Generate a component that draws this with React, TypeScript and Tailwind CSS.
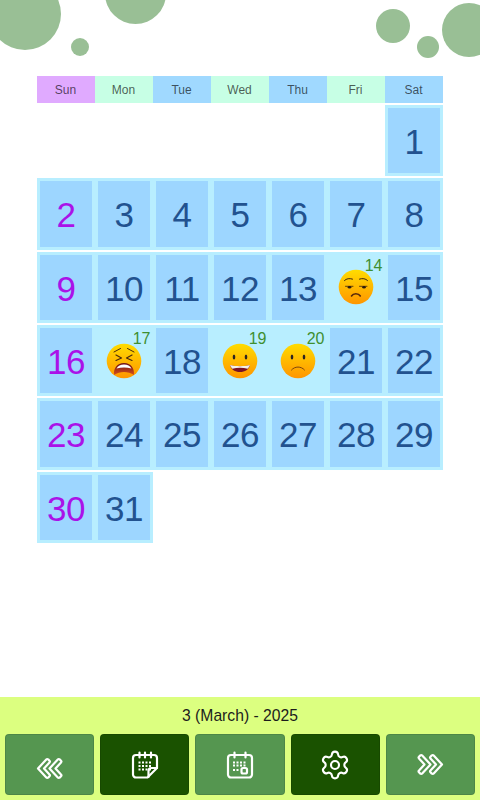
import React from 'react';
import { Settings } from 'lucide-react';

const DAYS = ['Sun', 'Mon', 'Tue', 'Wed', 'Thu', 'Fri', 'Sat'];
const DAY_BG = ['bg-[#e0aaff]', 'bg-[#c7ffe5]', 'bg-[#a0d9ff]', 'bg-[#c7ffe5]', 'bg-[#a0d9ff]', 'bg-[#c7ffe5]', 'bg-[#a0d9ff]'];

type Mood = 'annoyed' | 'tired' | 'happy' | 'sad';
const MOODS: Record<number, Mood> = { 14: 'annoyed', 17: 'tired', 19: 'happy', 20: 'sad' };

const Face: React.FC<{ mood: Mood }> = ({ mood }) => (
  <svg width="36" height="36" viewBox="0 0 36 36">
    <defs>
      <linearGradient id={`face-${mood}`} x1="0" y1="0" x2="0" y2="1">
        <stop offset="0" stopColor="#ffdc00" />
        <stop offset="1" stopColor="#ff9500" />
      </linearGradient>
      <linearGradient id="mouth-tired" x1="0" y1="0" x2="0" y2="1">
        <stop offset="0" stopColor="#6a1018" />
        <stop offset="1" stopColor="#d8501a" />
      </linearGradient>
    </defs>
    <circle cx="18" cy="18" r="17.3" fill={`url(#face-${mood})`} />
    {mood === 'annoyed' && (
      <g fill="none" stroke="#3a2410" strokeLinecap="round">
        <path d="M6.500 11.500c2-2 5-2.400 8-1.400M21.500 10.100c3-1 6-.6 8 1.400" strokeWidth="1" />
        <path d="M7.500 17.300h7.500M21.500 17.300H29" strokeWidth="0.800" />
        <ellipse cx="11.500" cy="18.300" rx="1.800" ry="1.200" fill="#2b1a0c" stroke="none" />
        <ellipse cx="26" cy="18.300" rx="1.800" ry="1.200" fill="#2b1a0c" stroke="none" />
        <path d="M13.500 27c1.800-3 7-3 8.800 0" strokeWidth="1.600" stroke="#5a2a0a" />
      </g>
    )}
    {mood === 'tired' && (
      <g fill="none" stroke="#4a2a0c" strokeLinecap="round" strokeLinejoin="round">
        <path d="M8 9l6.500-3.500M28 9l-6.500-3.500" strokeWidth="1" />
        <path d="M10 12l5.500 3-5.500 2.500M26 12l-5.500 3 5.500 2.500" strokeWidth="1.200" />
        <path d="M8 32c-.5-7 3-12 10-12s10.500 5 10 12c-3-2-6.500-3-10-3s-7 1-10 3z" fill="url(#mouth-tired)" stroke="none" />
        <path d="M10.500 25.500c1.500-2.800 4-4 7.500-4s6 1.200 7.500 4c-2.500-.8-5-1.100-7.500-1.100s-5 .3-7.500 1.100z" fill="#fff" stroke="none" />
      </g>
    )}
    {mood === 'happy' && (
      <g>
        <ellipse cx="12" cy="14" rx="1.300" ry="2.600" fill="#2b2420" />
        <ellipse cx="24" cy="14" rx="1.300" ry="2.600" fill="#2b2420" />
        <path d="M8 22c3 .8 6.500 1.200 10 1.200s7-.4 10-1.200c-1 4.800-5 7-10 7s-9-2.200-10-7z" fill="#7a1226" />
        <path d="M8 22c3 .8 6.500 1.200 10 1.200s7-.4 10-1.200c-.4 1.500-1.200 2.700-2.400 3.700-2.400-.6-4.900-.9-7.600-.9s-5.200.3-7.600.9C9.200 24.700 8.400 23.500 8 22z" fill="#f4f0ea" />
      </g>
    )}
    {mood === 'sad' && (
      <g>
        <ellipse cx="12" cy="14" rx="1.300" ry="2.600" fill="#2b2420" />
        <ellipse cx="24" cy="14" rx="1.300" ry="2.600" fill="#2b2420" />
        <path d="M11.500 27c3.200-4 9.800-4 13 0" fill="none" stroke="#6b3a10" strokeWidth="0.900" strokeLinecap="round" />
      </g>
    )}
  </svg>
);

const Cell: React.FC<{ n: number; col: number }> = ({ n, col }) => {
  const mood = MOODS[n];
  return (
    <div className="relative mb-[2px] h-[71.33px] bg-[#b8eeff] p-[3px]">
      {mood ? (
        <>
          <div className="flex h-full items-center justify-center">
            <Face mood={mood} />
          </div>
          <span className="absolute right-[3px] top-[5px] text-[16px] leading-[18px] tracking-[-0.3px] text-[#3f8f30]">{n}</span>
        </>
      ) : (
        <div className={`flex h-full items-center justify-center bg-[#9dd6ff] pt-[3px] text-[35px] tracking-[-0.4px] ${col === 0 ? 'text-[#aa12e8]' : 'text-[#22528f]'}`}>
          {n}
        </div>
      )}
    </div>
  );
};

const ChevronsIcon: React.FC<{ flip?: boolean }> = ({ flip }) => (
  <svg width="28" height="23" viewBox="0 0 28 23" fill="none" stroke="#fff" strokeWidth="2.200" strokeLinejoin="round" className={flip ? '-scale-x-100' : 'translate-y-[4px]'}>
    <path d="M2 11.500L10.300 2.400a1.300 1.300 0 0 1 1.900 0l1.300 1.300a1.300 1.300 0 0 1 0 1.800l-5.500 6 5.500 6a1.300 1.300 0 0 1 0 1.800l-1.300 1.300a1.300 1.300 0 0 1-1.900 0z" />
    <path d="M13.500 11.500L21.800 2.400a1.300 1.300 0 0 1 1.900 0l1.300 1.300a1.300 1.300 0 0 1 0 1.800l-5.500 6 5.500 6a1.300 1.300 0 0 1 0 1.800l-1.300 1.300a1.300 1.300 0 0 1-1.900 0z" />
  </svg>
);

const CalendarFoldIcon = () => (
  <svg width="28" height="28" viewBox="0 0 28 28" fill="none" stroke="#fff" strokeWidth="2.200" strokeLinejoin="round" strokeLinecap="round">
    <path d="M16.500 26.500H5a3 3 0 0 1-3-3V7a3 3 0 0 1 3-3h18a3 3 0 0 1 3 3v10z" />
    <path d="M26 17h-5.500a3 3 0 0 0-3 3v6" />
    <path d="M8.500 1.500v5M14 1.500v5M20 1.500v5" />
    <g fill="#fff" stroke="none">
      {[10.500, 14, 17.500].map(y =>
        [7.500, 11, 14.500, 18].map(x => <rect key={`${x}-${y}`} x={x} y={y} width="2" height="2" />)
      )}
    </g>
  </svg>
);

const CalendarDotIcon = () => (
  <svg width="28" height="28" viewBox="0 0 28 28" fill="none" stroke="#fff" strokeWidth="2.200" strokeLinejoin="round" strokeLinecap="round">
    <path d="M5 4h18a3 3 0 0 1 3 3v16.500a3 3 0 0 1-3 3H5a3 3 0 0 1-3-3V7a3 3 0 0 1 3-3z" />
    <path d="M8.500 1.500v5M19.500 1.500v5" />
    <rect x="15.500" y="17" width="5.500" height="5.500" rx="1.500" />
    <g fill="#fff" stroke="none">
      {[10.500, 13.500].map(y =>
        [7, 10.500, 14, 17.500].map(x => <rect key={`${x}-${y}`} x={x} y={y} width="2" height="2" />)
      )}
      <rect x="7" y="18" width="2" height="2" />
      <rect x="10.500" y="18" width="2" height="2" />
    </g>
  </svg>
);

const NavButton: React.FC<{ active?: boolean; children: React.ReactNode }> = ({ active, children }) => (
  <button className={`flex h-[61px] items-center justify-center rounded-[4px] border border-black/10 ${active ? 'bg-[#1a5200]' : 'bg-[#559650]'}`}>
    {children}
  </button>
);

export default function App() {
  // leading blanks for March 2025 (starts on Saturday)
  const cells: (number | null)[] = [...Array(6).fill(null), ...Array.from({ length: 31 }, (_, i) => i + 1)];

  return (
    <div className="relative flex h-[800px] w-[480px] flex-col overflow-hidden bg-white font-['Liberation_Sans',sans-serif]">
      {/* background bubbles */}
      <div className="absolute left-[-11px] top-[-22px] h-[72px] w-[72px] rounded-full bg-[#99bf95]" />
      <div className="absolute left-[105px] top-[-37px] h-[61px] w-[61px] rounded-full bg-[#99bf95]" />
      <div className="absolute left-[71px] top-[38px] h-[18px] w-[18px] rounded-full bg-[#99bf95]" />
      <div className="absolute left-[376px] top-[9px] h-[34px] w-[34px] rounded-full bg-[#99bf95]" />
      <div className="absolute left-[417px] top-[36px] h-[22px] w-[22px] rounded-full bg-[#99bf95]" />
      <div className="absolute left-[442px] top-[3px] h-[54px] w-[54px] rounded-full bg-[#99bf95]" />

      <div className="relative mx-[37px] mt-[76px]">
        <div className="grid grid-cols-7">
          {DAYS.map((d, i) => (
            <div key={d} className={`flex h-[27px] items-center justify-center pr-[1px] text-[12px] text-black/65 ${DAY_BG[i]}`}>
              {d}
            </div>
          ))}
        </div>
        <div className="mt-[2px] grid grid-cols-7">
          {cells.map((n, i) => (n === null ? <div key={`b${i}`} className="h-[73.33px]" /> : <Cell key={n} n={n} col={i % 7} />))}
        </div>
      </div>

      <div className="mt-auto bg-[#dcff80] px-[5px] pb-[5px]">
        <div className="flex h-[37px] items-center justify-center text-[15.7px] text-[#1c1c1c]">3 (March) - 2025</div>
        <div className="grid grid-cols-5 gap-[6px]">
          <NavButton><ChevronsIcon /></NavButton>
          <NavButton active><CalendarFoldIcon /></NavButton>
          <NavButton><CalendarDotIcon /></NavButton>
          <NavButton active><Settings size={32} color="#fff" strokeWidth={1.6} /></NavButton>
          <NavButton><ChevronsIcon flip /></NavButton>
        </div>
      </div>
    </div>
  );
}
